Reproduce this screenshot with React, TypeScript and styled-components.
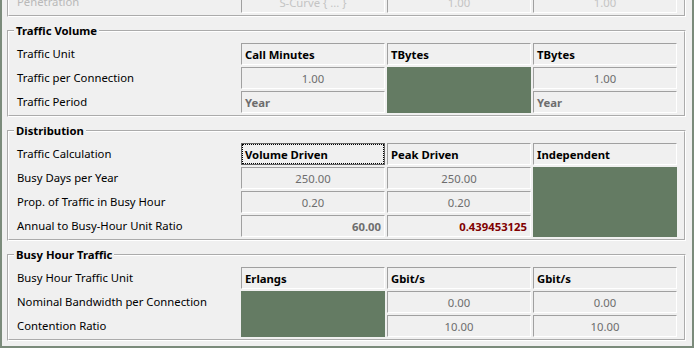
import React from 'react';
import styled, { createGlobalStyle, css } from 'styled-components';

const Global = createGlobalStyle`
  html, body { margin: 0; padding: 0; background: #f0f0f0; }
  body {
    font-family: "Noto Sans", "Liberation Sans", sans-serif;
    font-size: 11.3px;
    color: #000;
  }
`;

const Frame = styled.div`
  width: 694px;
  height: 348px;
  box-sizing: border-box;
  border: 2px solid #7b8b7b;
  border-top: none;
  background: #f0f0f0;
  overflow: hidden;
  padding: 0 6px 0 5px;
`;

const Scroller = styled.div`
  display: flex;
  flex-direction: column;
  gap: 6px;
  margin-top: -29px;
`;

const Group = styled.fieldset`
  margin: 0;
  min-width: 0;
  box-sizing: border-box;
  width: 679px;
  border: 2px groove #ffffff;
  padding: 4px 7px 2px 5px;
`;

const Legend = styled.legend`
  padding: 0 2px;
  margin: 0;
  font-weight: bold;
  line-height: 16px;
  height: 16px;
`;

const Grid = styled.div`
  display: grid;
  grid-template-columns: 225px 144px 144px 144px;
  grid-auto-rows: 22px;
  column-gap: 2px;
  row-gap: 2px;
`;

const Label = styled.div<{ $faded?: boolean }>`
  display: flex;
  align-items: center;
  padding-left: 3px;
  padding-bottom: 1px;
  white-space: nowrap;
  color: ${(p) => (p.$faded ? '#b9b9b9' : '#000')};
`;

type Kind = 'head' | 'num' | 'text' | 'ratio' | 'alert';

const Cell = styled.div<{
  $kind?: Kind;
  $align?: 'left' | 'center' | 'right';
  $faded?: boolean;
}>`
  display: flex;
  align-items: center;
  box-sizing: border-box;
  border-top: 1px solid #a0a0a0;
  border-left: 1px solid #a0a0a0;
  border-bottom: 1px solid #ffffff;
  border-right: 1px solid #ffffff;
  background: #f0f0f0;
  padding: 0 3px;
  white-space: nowrap;
  overflow: hidden;
  justify-content: ${(p) =>
    p.$align === 'center' ? 'center' : p.$align === 'right' ? 'flex-end' : 'flex-start'};
  ${(p) => {
    switch (p.$kind) {
      case 'head':
        return css`font-weight: bold; color: #000;`;
      case 'text':
        return css`font-weight: bold; color: #6d6d6d;`;
      case 'ratio':
        return css`font-weight: bold; color: #6d6d6d;`;
      case 'alert':
        return css`font-weight: bold; color: #800000;`;
      default:
        return css`color: #6d6d6d;`;
    }
  }}
  ${(p) => p.$faded && css`color: #c4c4c4;`}
`;

const FocusCell = styled.div`
  display: flex;
  box-sizing: border-box;
  border: 1px solid #646464;
  background: #f0f0f0;
`;

const FocusRing = styled.div`
  flex: 1;
  display: flex;
  align-items: center;
  border: 1px dotted #000;
  padding-left: 2px;
  font-weight: bold;
  white-space: nowrap;
`;

const Blocked = styled.div<{ $span: number }>`
  grid-row: span ${(p) => p.$span};
  background: #647b63;
`;

export default function App() {
  return (
    <>
      <Global />
      <Frame>
        <Scroller>
          <Group>
            <Legend>Connections</Legend>
            <Grid>
              <Label $faded>Penetration</Label>
              <Cell $align="center" $faded>S-Curve {'{ ... }'}</Cell>
              <Cell $align="center" $faded>1.00</Cell>
              <Cell $align="center" $faded>1.00</Cell>
            </Grid>
          </Group>

          <Group>
            <Legend>Traffic Volume</Legend>
            <Grid>
              <Label>Traffic Unit</Label>
              <Cell $kind="head">Call Minutes</Cell>
              <Cell $kind="head">TBytes</Cell>
              <Cell $kind="head">TBytes</Cell>

              <Label>Traffic per Connection</Label>
              <Cell $align="center">1.00</Cell>
              <Blocked $span={2} />
              <Cell $align="center">1.00</Cell>

              <Label>Traffic Period</Label>
              <Cell $kind="text">Year</Cell>
              <Cell $kind="text">Year</Cell>
            </Grid>
          </Group>

          <Group>
            <Legend>Distribution</Legend>
            <Grid>
              <Label>Traffic Calculation</Label>
              <FocusCell>
                <FocusRing>Volume Driven</FocusRing>
              </FocusCell>
              <Cell $kind="head">Peak Driven</Cell>
              <Cell $kind="head">Independent</Cell>

              <Label>Busy Days per Year</Label>
              <Cell $align="center">250.00</Cell>
              <Cell $align="center">250.00</Cell>
              <Blocked $span={3} />

              <Label>Prop. of Traffic in Busy Hour</Label>
              <Cell $align="center">0.20</Cell>
              <Cell $align="center">0.20</Cell>

              <Label>Annual to Busy-Hour Unit Ratio</Label>
              <Cell $kind="ratio" $align="right">60.00</Cell>
              <Cell $kind="alert" $align="right">0.439453125</Cell>
            </Grid>
          </Group>

          <Group>
            <Legend>Busy Hour Traffic</Legend>
            <Grid>
              <Label>Busy Hour Traffic Unit</Label>
              <Cell $kind="head">Erlangs</Cell>
              <Cell $kind="head">Gbit/s</Cell>
              <Cell $kind="head">Gbit/s</Cell>

              <Label>Nominal Bandwidth per Connection</Label>
              <Blocked $span={2} />
              <Cell $align="center">0.00</Cell>
              <Cell $align="center">0.00</Cell>

              <Label>Contention Ratio</Label>
              <Cell $align="center">10.00</Cell>
              <Cell $align="center">10.00</Cell>
            </Grid>
          </Group>
        </Scroller>
      </Frame>
    </>
  );
}
